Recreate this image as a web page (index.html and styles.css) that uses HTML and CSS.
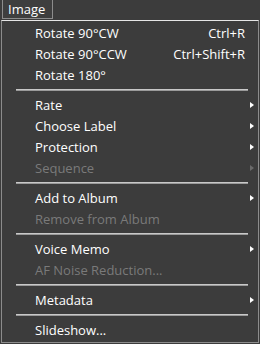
FILE: index.html
```html
<!DOCTYPE html>
<html>
<head>
    <meta charset="UTF-8">
    <title>Image Menu</title>
    <link rel="stylesheet" href="styles.css">
</head>
<body>
    <div class="tab">Image</div>
    <div class="menu">
        <div class="item"><span class="label">Rotate 90°CW</span><span class="key">Ctrl+R</span></div>
        <div class="item"><span class="label">Rotate 90°CCW</span><span class="key">Ctrl+Shift+R</span></div>
        <div class="item"><span class="label">Rotate 180°</span></div>
        <div class="sep"></div>
        <div class="item sub"><span class="label">Rate</span></div>
        <div class="item sub"><span class="label">Choose Label</span></div>
        <div class="item sub"><span class="label">Protection</span></div>
        <div class="item sub off"><span class="label">Sequence</span></div>
        <div class="sep"></div>
        <div class="item sub"><span class="label">Add to Album</span></div>
        <div class="item off"><span class="label">Remove from Album</span></div>
        <div class="sep"></div>
        <div class="item sub"><span class="label">Voice Memo</span></div>
        <div class="item off"><span class="label">AF Noise Reduction...</span></div>
        <div class="sep"></div>
        <div class="item sub"><span class="label">Metadata</span></div>
        <div class="sep"></div>
        <div class="item"><span class="label">Slideshow...</span></div>
    </div>
</body>
</html>
```

FILE: styles.css
```css
html, body {
    margin: 0;
    height: 100%;
}

body {
    background-color: #3c3c3c;
    color: #ffffff;
    font-family: "Open Sans", "Noto Sans", sans-serif;
    font-size: 13px;
    overflow: hidden;
}

.tab {
    box-sizing: border-box;
    margin-left: 2px;
    width: 51px;
    height: 19px;
    border: 1px solid #8c8c8c;
    border-top: none;
    padding-left: 5px;
    line-height: 18px;
    background-color: #3e3e3e;
}

.menu {
    box-sizing: border-box;
    margin-top: 1px;
    margin-left: 1px;
    width: 258px;
    height: 323px;
    border: 1px solid #8c8c8c;
    border-top-color: #e6e6e6;
    padding-top: 2px;
}

.item {
    position: relative;
    display: flex;
    justify-content: space-between;
    height: 21px;
    line-height: 21px;
    padding-left: 33px;
    padding-right: 13px;
}

.item.off {
    color: #7a7a7a;
}

.sub::after {
    content: "";
    position: absolute;
    right: 4px;
    top: 7px;
    border-left: 4px solid #ffffff;
    border-top: 3.5px solid transparent;
    border-bottom: 3.5px solid transparent;
}

.sub.off::after {
    border-left-color: #6a6a6a;
}

.sep {
    height: 1px;
    margin: 3px 10px 4px 14px;
    background-color: #c8c8c8;
    border-bottom: 1px solid #9a9a9a;
}
```
